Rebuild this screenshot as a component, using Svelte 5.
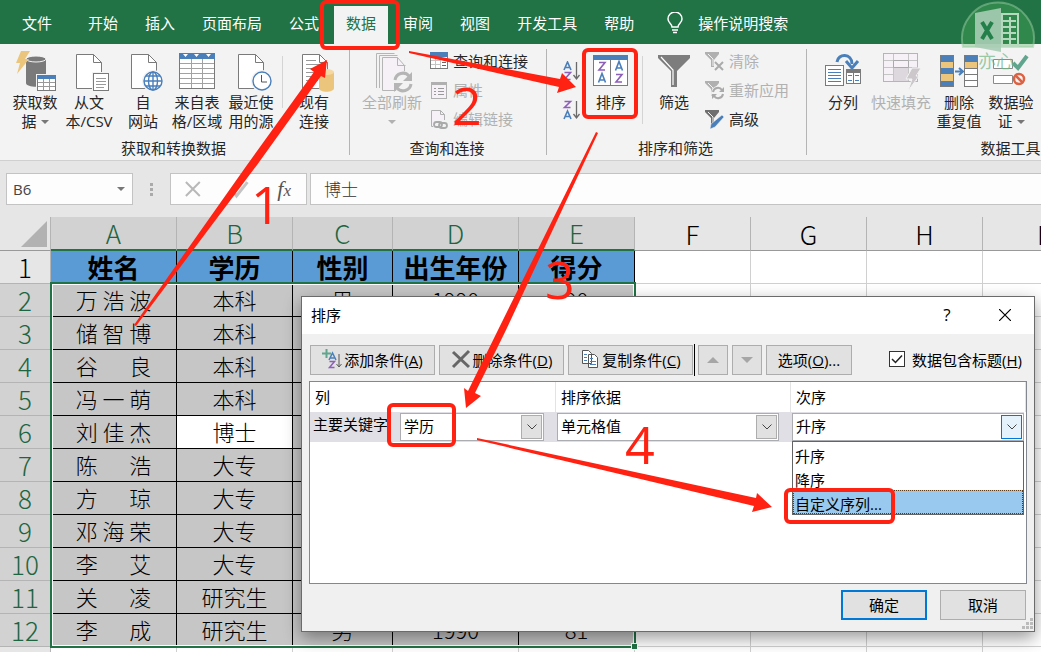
<script lang="ts">
	type Row = { name: string; edu: string; sex: string; year: string; score: string };

	const tabs = ['文件', '开始', '插入', '页面布局', '公式', '数据', '审阅', '视图', '开发工具', '帮助'];
	const activeTab = '数据';

	const sources = [
		{ icon: 'database', lines: ['获取数', '据'], menu: true },
		{ icon: 'text', lines: ['从文', '本/CSV'] },
		{ icon: 'web', lines: ['自', '网站'] },
		{ icon: 'table', lines: ['来自表', '格/区域'] },
		{ icon: 'recent', lines: ['最近使', '用的源'] }
	];

	const tools = [
		{ icon: 'split', lines: ['分列'] },
		{ icon: 'flash', lines: ['快速填充'], disabled: true },
		{ icon: 'dedupe', lines: ['删除', '重复值'] },
		{ icon: 'validate', lines: ['数据验', '证'], menu: true }
	];

	const columns = [
		{ id: 'A', width: 126 },
		{ id: 'B', width: 116 },
		{ id: 'C', width: 100 },
		{ id: 'D', width: 126 },
		{ id: 'E', width: 116 },
		{ id: 'F', width: 116 },
		{ id: 'G', width: 116 },
		{ id: 'H', width: 116 },
		{ id: 'I', width: 116 },
		{ id: 'J', width: 116 },
		{ id: 'K', width: 116 }
	];
	const blank = columns.slice(5);

	const titles = ['姓名', '学历', '性别', '出生年份', '得分'];

	const rows: Row[] = [
		{ name: '万 浩 波', edu: '本科', sex: '男', year: '1990', score: '90' },
		{ name: '储 智 博', edu: '本科', sex: '男', year: '1990', score: '88' },
		{ name: '谷 　 良', edu: '本科', sex: '男', year: '1990', score: '85' },
		{ name: '冯 一 萌', edu: '本科', sex: '女', year: '1990', score: '86' },
		{ name: '刘 佳 杰', edu: '博士', sex: '男', year: '1990', score: '92' },
		{ name: '陈 　 浩', edu: '大专', sex: '男', year: '1990', score: '79' },
		{ name: '方 　 琼', edu: '大专', sex: '女', year: '1990', score: '83' },
		{ name: '邓 海 荣', edu: '大专', sex: '女', year: '1990', score: '80' },
		{ name: '李 　 艾', edu: '大专', sex: '女', year: '1990', score: '84' },
		{ name: '关 　 凌', edu: '研究生', sex: '女', year: '1990', score: '87' },
		{ name: '李 　 成', edu: '研究生', sex: '男', year: '1990', score: '81' }
	];

	const orders = ['升序', '降序', '自定义序列...'];
	let highlighted = $state('自定义序列...');
	let hasTitles = $state(true);
	let cell = $state('B6');
	let formula = $state('博士');
</script>

{#snippet page()}
	<path d="M6.500 4.500h17l8 8v26h-25z" fill="#fff" stroke="#7a7a7a" />
	<path d="M23.500 4.500v8h8" fill="none" stroke="#7a7a7a" />
{/snippet}

{#snippet bigIcon(name: string)}
	<svg class="big-icon" viewBox="0 0 42 42" aria-hidden="true">
		{#if name === 'database'}
			<path d="M12 9v24c0 5 20 5 20 0V9z" fill="#7a7a7a" />
			<ellipse cx="22" cy="9" rx="10" ry="3" fill="#7a7a7a" stroke="#f3f3f3" />
			<path d="M7 1h9l-5 8h4L3 24l3-11H2z" fill="#ecc57c" />
			<rect x="22" y="24" width="20" height="17" fill="#f3f3f3" />
			<rect x="23.500" y="25.500" width="18" height="15" fill="#fff" stroke="#7a7a7a" />
			<path d="M23 25h19v4H23z" fill="#4a7fba" />
			<path d="M24 32.500h17M24 36.500h17M29.500 29v11M35.500 29v11" stroke="#999" />
		{:else if name === 'text'}
			<g transform="translate(2 0)">
				{@render page()}
				<rect x="22" y="22" width="18" height="20" fill="#f3f3f3" />
				<rect x="23.500" y="23.500" width="15" height="17" fill="#fff" stroke="#7a7a7a" />
				<path d="M26 28.500h10M26 31.500h10M26 34.500h10M26 37.500h8" stroke="#999" />
			</g>
		{:else if name === 'web'}
			<g transform="translate(3 0)">
				{@render page()}
				<circle cx="28" cy="31" r="11" fill="#f3f3f3" />
				<g fill="#fff" stroke="#4a7fba" stroke-width="1.400">
					<circle cx="28" cy="31" r="9" />
					<ellipse cx="28" cy="31" rx="4.500" ry="9" />
					<path d="M28 22v18M19 31h18M21 26h14M21 36h14" />
				</g>
			</g>
		{:else if name === 'table'}
			<rect x="3.500" y="3.500" width="35" height="35" fill="#fff" stroke="#7a7a7a" />
			<path d="M3 3h36v6H3z" fill="#4a7fba" />
			<path d="M7 4h5l-2.500 3zM18 4h5l-2.500 3zM30 4h5l-2.500 3z" fill="#fff" />
			<path d="M4 13.500h34M4 18.500h34M4 23.500h34M4 28.500h34M4 33.500h34M15.500 9v29M26.500 9v29" stroke="#a2a2a2" />
		{:else if name === 'recent'}
			<g transform="translate(2 0)">
				{@render page()}
				<circle cx="30" cy="31" r="11" fill="#f3f3f3" />
				<circle cx="30" cy="31" r="9" fill="#fff" stroke="#4a7fba" stroke-width="1.400" />
				<path d="M29.500 25v7H35" fill="none" stroke="#555" />
			</g>
		{:else if name === 'existing'}
			<g transform="translate(3 0)">
				{@render page()}
				<path d="M10 10.500h10M10 14.500h15M10 18.500h17M10 22.500h15M10 26.500h12M10 30.500h12" stroke="#999" />
				<path d="M23 22v16c0 5 15 5 15 0V22z" fill="#ecc57c" />
				<ellipse cx="30.500" cy="22" rx="7.500" ry="3" fill="#f6d9a2" />
			</g>
		{:else if name === 'refresh'}
			<path d="M5.500 38V3.500h18M8.500 38V5.500h18" fill="none" stroke="#b5b5b5" />
			<path d="M11.500 7.500h15l7 8v25h-22z" fill="#f6f1f6" stroke="#b5b5b5" />
			<path d="M26.500 7.500v8h8" fill="none" stroke="#b5b5b5" />
			<circle cx="32" cy="32" r="11" fill="#f3f3f3" />
			<path d="M24 30a8 8 0 0 1 14-4M40 34a8 8 0 0 1-14 4" fill="none" stroke="#b5b5b5" stroke-width="3" />
			<path d="M41 22v9h-9zM23 42v-9h9z" fill="#b5b5b5" />
		{:else if name === 'sort'}
			<rect x="3.500" y="5.500" width="34" height="30" fill="#fff" stroke="#7a7a7a" />
			<path d="M3 5h35v5H3z" fill="#4a7fba" />
			<path d="M20.500 10v25" stroke="#7a7a7a" />
			<g fill="none" stroke-width="1.600">
				<path d="M9 12.500h6l-6 7.500h6M26 24.500h6l-6 7.500h6" stroke="#8c5fb8" />
				<path d="M8.500 32.500l3.500-9 3.500 9M9.500 30h5M25.500 20.500l3.500-9 3.500 9M26.500 18h5" stroke="#4a7fba" />
			</g>
		{:else if name === 'filter'}
			<path d="M5 5h32v3L24 21v16h-6V21L5 8z" fill="#7d7d7d" />
			<path d="M8 7l12 13v15" fill="none" stroke="#fff" stroke-width="1.200" />
		{:else if name === 'split'}
			<path d="M15 12c1-9 15-9 15 2" fill="none" stroke="#4a7fba" stroke-width="3" />
			<path d="M24 11l6 7 6-7" fill="none" stroke="#4a7fba" stroke-width="3" />
			<rect x="3.500" y="15.500" width="18" height="20" fill="#fff" stroke="#7a7a7a" />
			<path d="M6 19.500h13M6 22.500h13M6 25.500h13M6 28.500h13M6 31.500h13" stroke="#4a7fba" />
			<rect x="24.500" y="19.500" width="14" height="14" fill="#fff" stroke="#7a7a7a" />
			<path d="M24 19h15v4H24z" fill="#7a7a7a" />
			<path d="M31.500 23v10" stroke="#7a7a7a" />
			<path d="M26 25.500h4M26 30.500h4M33 25.500h4M33 30.500h4" stroke="#4a7fba" />
		{:else if name === 'flash'}
			<rect x="3.500" y="3.500" width="34" height="28" fill="#f6f1f6" stroke="#b5b5b5" />
			<path d="M4 10.500h33M4 17.500h33M4 24.500h33M13.500 4v27M28.500 4v27" stroke="#c5c5c5" />
			<path d="M13.500 10.500h15v7h-15z" fill="none" stroke="#aaa" />
			<path d="M14 18h14v13H14z" fill="#ddd8dd" />
			<path d="M32 18h9l-5 8h3L28 41l4-12h-6z" fill="#cbc7cb" stroke="#f3f3f3" />
		{:else if name === 'dedupe'}
			<rect x="2.500" y="5.500" width="13" height="31" fill="#4a7fba" stroke="#7a7a7a" />
			<path d="M3 12h12v6H3zM3 24h12v7H3z" fill="#ecc57c" />
			<path d="M17 21.500h7M21 18l4 3.500-4 3.500" fill="none" stroke="#4a7fba" stroke-width="2" />
			<rect x="26.500" y="5.500" width="13" height="31" fill="#fff" stroke="#7a7a7a" />
			<path d="M27 6h12v6H27z" fill="#4a7fba" />
			<path d="M27 12h12v6H27z" fill="#ecc57c" />
			<path d="M27 18.500h12M27 24.500h12M27 30.500h12" stroke="#7a7a7a" />
		{:else if name === 'validate'}
			<path d="M3.500 9.500h19v9h-19zM3.500 25.500h19v8h-19z" fill="#fff" stroke="#8a8a8a" />
			<path d="M23 13l5 5L37 6" fill="none" stroke="#62a58e" stroke-width="4" />
			<circle cx="29" cy="29" r="5" fill="#f3f3f3" stroke="#dd6243" stroke-width="2.500" />
			<path d="M25.500 25.500l7 7" stroke="#dd6243" stroke-width="2.500" />
		{/if}
	</svg>
{/snippet}

{#snippet smallIcon(name: string)}
	<svg class="small-icon" viewBox="0 0 20 20" aria-hidden="true">
		{#if name === 'queries'}
			<rect x="1.500" y="2.500" width="17" height="15" fill="#fff" stroke="#7a7a7a" />
			<path d="M1 1h18v5H1z" fill="#4a7fba" />
			<path d="M11.500 6v11M2 9.500h9M2 13.500h9M6.500 6v11" stroke="#c5c5c5" />
			<path d="M13 8.500h4M13 11.500h4M13 14.500h4" stroke="#666" />
		{:else if name === 'props'}
			<rect x="2.500" y="2.500" width="15" height="16" fill="#f6f1f6" stroke="#b0b0b0" />
			<path d="M2 2h16v3H2z" fill="#b0b0b0" />
			<path d="M5 8.500h2M5 11.500h2M5 14.500h2M9 8.500h6M9 11.500h6M9 14.500h6" stroke="#999" />
		{:else if name === 'links'}
			<path d="M2.500 1.500h9l4 4v12h-13z" fill="#f6f1f6" stroke="#b0b0b0" />
			<path d="M11.500 1.500v4h4" fill="none" stroke="#b0b0b0" />
			<path d="M4 11h15v9H4z" fill="#f3f3f3" />
			<rect x="5" y="13" width="8" height="5" rx="2.500" fill="none" stroke="#aaa" stroke-width="1.800" />
			<rect x="10" y="14" width="8" height="5" rx="2.500" fill="none" stroke="#aaa" stroke-width="1.800" />
		{:else}
			{@const off = name !== 'advanced'}
			<path d="M0 1h14v2L9 9v7H6V9L0 3z" fill={off ? '#b0b0b0' : '#707070'} />
			<path d="M3 3l5 5v7" fill="none" stroke="#f3f3f3" />
			{#if name === 'clear'}
				<path d="M10 11l8 8M18 11l-8 8" stroke="#aaa" stroke-width="2" />
			{:else if name === 'reapply'}
				<circle cx="13" cy="13" r="7" fill="#f3f3f3" />
				<path d="M8 12a5 5 0 0 1 9-2M18 14a5 5 0 0 1-9 2" fill="none" stroke="#aaa" stroke-width="2" />
				<path d="M19 7v5h-5zM7 19v-5h5z" fill="#aaa" />
			{:else}
				<path d="M17 6l2 2-9 10-5 2 1-5z" fill="#4a7fba" stroke="#f3f3f3" stroke-width="0.500" />
			{/if}
		{/if}
	</svg>
{/snippet}

{#snippet azIcon(down: boolean)}
	<svg class="az-icon" viewBox="0 0 20 20" aria-hidden="true">
		<g fill="none" stroke-width="1.600">
			{#if down}
				<path d="M2 9l3.500-8L9 9M3 6.500h5" stroke="#4a7fba" />
				<path d="M2.500 11.500h6l-6 7h6" stroke="#8c5fb8" />
			{:else}
				<path d="M2.500 1.500h6l-6 6h6" stroke="#8c5fb8" />
				<path d="M2 19l3.500-8L9 19M3 16.500h5" stroke="#4a7fba" />
			{/if}
			<path d="M14.500 1v16M11.500 14l3 4 3-4" stroke="#6a6a6a" stroke-width="1.300" />
		</g>
	</svg>
{/snippet}

{#snippet bigButton(icon: string, lines: string[], menu = false, disabled = false)}
	<button class="big" {disabled}>
		{@render bigIcon(icon)}
		{#each lines as line, i}
			<span>{line}{#if menu && i === lines.length - 1}<i class="caret"></i>{/if}</span>
		{/each}
	</button>
{/snippet}

{#snippet chevron()}
	<span class="chevron" aria-hidden="true">
		<svg viewBox="0 0 10 6"><path d="M0.500 0.500L5 5l4.500-4.500" fill="none" stroke="#444" /></svg>
	</span>
{/snippet}

<div class="window">
	<nav class="tabs">
		{#each tabs as tab}
			<button class="tab" class:first={tab === '文件'} class:active={tab === activeTab}>{tab}</button>
		{/each}
		<button class="tab tell">
			<svg viewBox="0 0 16 22" aria-hidden="true">
				<path d="M5 15c0-3-4-4-4-8a7 7 0 0 1 14 0c0 4-4 5-4 8z" fill="none" stroke="#fff" stroke-width="1.500" />
				<path d="M5 18h6M6 20.500h4" stroke="#fff" stroke-width="1.500" />
			</svg>
			操作说明搜索
		</button>
	</nav>

	<div class="ribbon">
		<section class="group get">
			<div class="tools">
				{#each sources as s}
					{@render bigButton(s.icon, s.lines, s.menu)}
				{/each}
				<hr />
				{@render bigButton('existing', ['现有', '连接'])}
			</div>
			<h2>获取和转换数据</h2>
		</section>
		<section class="group query">
			<div class="tools">
				<button class="big wide" disabled>
					{@render bigIcon('refresh')}
					<span>全部刷新</span>
					<span><i class="caret"></i></span>
				</button>
				<div class="stack">
					<button class="small">{@render smallIcon('queries')}查询和连接</button>
					<button class="small" disabled>{@render smallIcon('props')}属性</button>
					<button class="small" disabled>{@render smallIcon('links')}编辑链接</button>
				</div>
			</div>
			<h2>查询和连接</h2>
		</section>
		<section class="group sorting">
			<div class="tools">
				<div class="az">
					<button aria-label="升序">{@render azIcon(true)}</button>
					<button aria-label="降序">{@render azIcon(false)}</button>
				</div>
				{@render bigButton('sort', ['排序'])}
				<hr class="tall" />
				{@render bigButton('filter', ['筛选'])}
				<div class="stack">
					<button class="small" disabled>{@render smallIcon('clear')}清除</button>
					<button class="small" disabled>{@render smallIcon('reapply')}重新应用</button>
					<button class="small">{@render smallIcon('advanced')}高级</button>
				</div>
			</div>
			<h2>排序和筛选</h2>
		</section>
		<section class="group data">
			<div class="tools">
				{#each tools as t}
					{@render bigButton(t.icon, t.lines, t.menu, t.disabled)}
				{/each}
			</div>
			<h2>数据工具</h2>
		</section>
	</div>

	<div class="formula-bar">
		<div class="name-box">
			<input aria-label="名称框" bind:value={cell} />
			<i class="caret"></i>
		</div>
		<span class="dots" aria-hidden="true"></span>
		<div class="fx">
			<svg viewBox="0 0 136 30" aria-hidden="true">
				<path d="M15 8l14 14M29 8L15 22" stroke="#b8b8b8" stroke-width="2" />
				<path d="M62 16l4 6 11-14" fill="none" stroke="#c4c4c4" stroke-width="3" />
			</svg>
			<em>f<small>x</small></em>
		</div>
		<input class="formula" aria-label="编辑栏" bind:value={formula} />
	</div>

	<div class="sheet">
		<table>
			<colgroup>
				<col style="width: 51px" />
				{#each columns as c}
					<col style="width: {c.width}px" />
				{/each}
			</colgroup>
			<thead>
				<tr>
					<th class="corner"><svg viewBox="0 0 26 26" aria-hidden="true"><path d="M26 0v26H0z" fill="#b2b2b2" /></svg></th>
					{#each columns as c, i}
						<th scope="col" class:picked={i < 5}>{c.id}</th>
					{/each}
				</tr>
			</thead>
			<tbody>
				<tr>
					<th scope="row">1</th>
					{#each titles as t}
						<td class="title">{t}</td>
					{/each}
					{#each blank as c (c.id)}<td></td>{/each}
				</tr>
				{#each rows as r, i}
					<tr>
						<th scope="row" class="picked">{i + 2}</th>
						<td class="in">{r.name}</td>
						<td class="in" class:current={i === 4}>{r.edu}</td>
						<td class="in">{r.sex}</td>
						<td class="in">{r.year}</td>
						<td class="in">{r.score}</td>
						{#each blank as c (c.id)}<td></td>{/each}
					</tr>
				{/each}
				<tr>
					<th scope="row"></th>
					{#each columns as c (c.id)}<td></td>{/each}
				</tr>
			</tbody>
		</table>
		<div class="selection"></div>
	</div>

	<div class="dialog" role="dialog" aria-labelledby="sort-title">
		<header>
			<h1 id="sort-title">排序</h1>
			<button aria-label="帮助">?</button>
			<button aria-label="关闭">
				<svg viewBox="0 0 12 12"><path d="M0 0l12 12M12 0L0 12" stroke="#000" stroke-width="1.200" /></svg>
			</button>
		</header>
		<div class="body">
			<div class="bar">
				<button>
					<svg viewBox="0 0 20 20" aria-hidden="true">
						<path d="M4.500 0v9M0 4.500h9" stroke="#62a58e" stroke-width="2" />
						<path d="M7 11l3.500-7 3.500 7M8 9h5" fill="none" stroke="#4a7fba" stroke-width="1.500" />
						<path d="M7.500 12.500h5l-5 6h5" fill="none" stroke="#8c5fb8" stroke-width="1.500" />
						<path d="M17 5v12M14.500 15l2.500 3 2.500-3" fill="none" stroke="#555" />
					</svg>
					<span>添加条件(<u>A</u>)</span>
				</button>
				<button>
					<svg viewBox="0 0 20 20" aria-hidden="true">
						<path d="M2 3l16 15M18 2L2 18" stroke="#666" stroke-width="3" />
					</svg>
					<span>删除条件(<u>D</u>)</span>
				</button>
				<button>
					<svg viewBox="0 0 20 20" aria-hidden="true">
						<path d="M2.500 1.500h6l3 3v10h-9zM8.500 5.500h6l3 3v10h-9z" fill="#fff" stroke="#555" />
						<path d="M4 5.500h3M4 8.500h3M4 11.500h3M10 9.500h3M10 12.500h6M10 15.500h6" stroke="#4a7fba" />
					</svg>
					<span>复制条件(<u>C</u>)</span>
				</button>
				<span class="divider"></span>
				<button class="move" aria-label="上移" disabled><i class="up"></i></button>
				<button class="move" aria-label="下移" disabled><i class="down"></i></button>
				<button class="options"><span>选项(<u>O</u>)...</span></button>
				<label class="check">
					<input type="checkbox" bind:checked={hasTitles} />
					<span>数据包含标题(<u>H</u>)</span>
				</label>
			</div>

			<div class="levels">
				<div class="line heads">
					<span>列</span>
					<span>排序依据</span>
					<span>次序</span>
				</div>
				<div class="line fields">
					<div class="field">
						<label for="key">主要关键字</label>
						<div class="combo">
							<select id="key"><option>学历</option></select>
							{@render chevron()}
						</div>
					</div>
					<div class="field">
						<div class="combo">
							<select aria-label="排序依据"><option>单元格值</option></select>
							{@render chevron()}
						</div>
					</div>
					<div class="field">
						<div class="combo open">
							<select aria-label="次序"><option>升序</option></select>
							{@render chevron()}
							<ul role="listbox" aria-label="次序">
								{#each orders as o}
									<!-- svelte-ignore a11y_click_events_have_key_events -->
									<li role="option" tabindex="-1" aria-selected={o === highlighted} onclick={() => (highlighted = o)}>{o}</li>
								{/each}
							</ul>
						</div>
					</div>
				</div>
			</div>

			<footer>
				<button class="ok">确定</button>
				<button>取消</button>
			</footer>
		</div>
		<svg class="grip" viewBox="0 0 12 12" aria-hidden="true">
			<path d="M9 0h3v3H9zM5 4h3v3H5zM9 4h3v3H9zM1 8h3v3H1zM5 8h3v3H5zM9 8h3v3H9z" fill="#bbb" />
		</svg>
	</div>

	<!-- logo stamp in the corner -->
	<svg class="stamp" viewBox="0 0 80 80">
		<path d="M3 47a36 36 0 1 1 70 0z" fill="#4fae5b" fill-opacity="0.35" stroke="#9ccfa4" stroke-opacity="0.5" stroke-width="2" />
		<path d="M42 14h16v32H42z" fill="none" stroke="#b5d9bd" stroke-width="2" />
		<path d="M43 21h13M43 27h13M43 33h13M43 39h13M50 17v28" stroke="#b5d9bd" stroke-width="2" />
		<path d="M15 13l26-5v44l-26-5z" fill="#a8cdb5" fill-opacity="0.9" />
		<path d="M22 22l10 17M32 22L22 39" stroke="#23804a" stroke-width="4" />
		<text x="18" y="68">亦心</text>
	</svg>

	<!-- numbered steps drawn over everything -->
	<svg class="steps" width="1041" height="652" viewBox="0 0 1041 652">
		<g fill="none" stroke="#ff2212" stroke-width="4">
			<rect x="322" y="2" width="76" height="46" rx="4" />
			<rect x="584" y="50" width="52" height="67" rx="4" />
			<rect x="389" y="405" width="65" height="40" rx="4" />
			<rect x="786" y="490" width="107" height="32" rx="4" />
		</g>
		<g fill="#ff2212">
			<polygon points="134,325 247,165 314,72 310,69 327,60 325,78 321,76 257,165 136,326" />
			<polygon points="409,51 560,79 562,73 576,87 557,93 559,87 409,53" />
			<polygon points="596,132 598,133 506,330 475,393 481,396 466,408 464,388 468,391 498,330" />
			<polygon points="477,438 756,498 757,493 772,507 752,512 754,506 477,440" />
			<text x="251" y="224">1</text>
			<text x="452" y="125">2</text>
			<text x="545" y="299">3</text>
			<text x="625" y="464">4</text>
		</g>
	</svg>
</div>

<style>
	:global(body) {
		margin: 0;
	}
	.window {
		position: relative;
		display: flex;
		flex-direction: column;
		height: 100vh;
		overflow: hidden;
		background: #e6e6e6;
		color: #262626;
		font-family: "Open Sans", "Noto Sans CJK SC", sans-serif;
		font-size: 15px;
	}
	button,
	input,
	select {
		font: inherit;
		color: inherit;
		box-sizing: border-box;
	}
	button {
		padding: 0;
		border: 0;
		background: none;
		white-space: nowrap;
	}
	h1,
	h2 {
		margin: 0;
		font-size: 15px;
		font-weight: 400;
	}

	/* tabs */
	.tabs {
		display: flex;
		align-items: flex-end;
		gap: 3px;
		height: 44px;
		padding-left: 10px;
		background: #217346;
		flex: none;
	}
	.tab {
		height: 38px;
		padding: 0 12px 5px;
		color: #fff;
	}
	.tab.first {
		margin-right: 9px;
	}
	.tab.active {
		background: #f3f3f3;
		color: #217346;
	}
	.tell {
		display: flex;
		align-items: center;
		gap: 15px;
		margin-left: 6px;
	}
	.tell svg {
		width: 16px;
		height: 22px;
	}

	/* ribbon */
	.ribbon {
		display: flex;
		height: 116px;
		flex: none;
		overflow: hidden;
		background: #f3f3f3;
		border-bottom: 1px solid #d0d0d0;
		line-height: 19px;
	}
	.group {
		display: flex;
		flex-direction: column;
		justify-content: space-between;
		flex: none;
		box-sizing: border-box;
		margin: 5px 0;
		border-right: 1px solid #b4b4b4;
	}
	.group h2 {
		line-height: 14px;
		text-align: center;
	}
	.get {
		width: 350px;
		padding-left: 8px;
	}
	.query {
		width: 197px;
		padding-left: 12px;
	}
	.query h2 {
		margin-left: -14px;
	}
	.get h2 {
		margin-left: -10px;
	}
	.sorting {
		width: 260px;
		padding-left: 15px;
	}
	.sorting h2 {
		margin-left: -17px;
	}
	.data {
		width: 408px;
	}
	.data .tools {
		gap: 4px;
		padding-left: 9px;
	}
	.tools {
		display: flex;
		align-items: flex-start;
	}
	.big {
		display: flex;
		flex-direction: column;
		align-items: center;
		width: 54px;
		line-height: 19px;
	}
	.big.wide {
		width: 60px;
	}
	.data .big:last-child {
		margin-left: -6px;
	}
	.big-icon {
		width: 42px;
		height: 42px;
		margin: 1px 0;
		overflow: visible;
	}
	.big:disabled,
	.small:disabled {
		color: #b1b1b1;
	}
	.caret {
		display: inline-block;
		margin-left: 4px;
		border: 4px solid transparent;
		border-top-color: #777;
		border-bottom: 0;
		vertical-align: 3px;
	}
	.big:disabled .caret {
		margin: 0;
		border-top-color: #b1b1b1;
	}
	hr {
		width: 1px;
		height: 52px;
		margin: 7px 4px 0;
		border: 0;
		background: #d4d4d4;
	}
	hr.tall {
		height: 68px;
	}
	.stack {
		display: flex;
		flex-direction: column;
		gap: 10px;
		padding: 3px 0 0 7px;
	}
	.small {
		display: flex;
		align-items: center;
		gap: 4px;
		line-height: 19px;
	}
	.sorting .stack {
		padding-left: 4px;
	}
	.small-icon {
		width: 20px;
		height: 20px;
		margin: -1px 0 0;
	}
	.az {
		display: flex;
		flex-direction: column;
		gap: 19px;
		padding: 12px 2px 0 0;
	}
	.az button {
		display: flex;
	}
	.az-icon {
		width: 20px;
		height: 20px;
	}

	/* formula bar */
	.formula-bar {
		display: flex;
		align-items: center;
		height: 56px;
		padding-left: 6px;
		flex: none;
	}
	.name-box,
	.fx,
	.formula {
		box-sizing: border-box;
		height: 32px;
		border: 1px solid #c3c3c3;
		background: #fdfdfd;
	}
	.name-box {
		display: flex;
		align-items: center;
		width: 127px;
		padding: 0 7px 0 6px;
		font-size: 15px;
	}
	.name-box input {
		flex: 1;
		min-width: 0;
		padding: 0;
		border: 0;
		background: none;
		color: #444;
	}
	.dots {
		width: 3px;
		height: 13px;
		margin: 0 17px;
		background: repeating-linear-gradient(#aaa 0 3px, transparent 3px 5px);
	}
	.fx {
		position: relative;
		display: flex;
		align-items: center;
		justify-content: flex-end;
		width: 137px;
		padding-right: 15px;
	}
	.fx svg {
		position: absolute;
		left: 0;
		top: 0;
		width: 135px;
		height: 30px;
	}
	.fx em {
		font: italic 22px "Liberation Serif", serif;
		color: #555;
	}
	.fx small {
		font-size: 17px;
	}
	.formula {
		flex: 1;
		min-width: 0;
		margin-left: 3px;
		padding: 0 13px 2px;
		border-right: 0;
		color: #333;
		font-size: 17px;
		font-weight: 300;
	}

	/* grid */
	.sheet {
		position: relative;
		flex: 1;
		overflow: hidden;
		background: #fff;
	}
	table {
		table-layout: fixed;
		width: 0;
		border-collapse: separate;
		border-spacing: 0;
		font-family: "Noto Sans CJK SC", sans-serif;
	}
	th,
	td {
		box-sizing: border-box;
		height: 33px;
		padding: 0;
		border-right: 1px solid #d0d0d0;
		border-bottom: 1px solid #d0d0d0;
		text-align: center;
		white-space: pre;
		font-size: 22px;
		font-weight: 300;
		line-height: 32px;
		color: #000;
	}
	th {
		font-size: 26px;
		background: #e6e6e6;
		border-color: #b4b4b4;
	}
	thead th {
		height: 34px;
		border-bottom-color: #999;
	}
	th.picked {
		background: #d2d2d2;
		color: #1d6540;
	}
	thead th.picked {
		border-bottom: 2px solid #217346;
	}
	.corner svg {
		display: block;
		width: 26px;
		height: 26px;
		margin: 0 3px 0 auto;
	}
	td.title {
		background: #5b9bd5;
		border-color: #000;
		font-size: 26px;
		font-weight: 700;
	}
	td.in {
		padding-bottom: 2px;
		background: #c6c6c6;
		border-color: #000;
		line-height: 30px;
	}
	td.in.current {
		background: #fff;
	}
	.selection {
		position: absolute;
		left: 50px;
		top: 65px;
		box-sizing: border-box;
		width: 586px;
		height: 366px;
		border: 2px solid #217346;
		box-shadow: inset 0 0 0 1px #fff;
	}
	.selection::after {
		content: "";
		position: absolute;
		right: -4px;
		bottom: -4px;
		width: 5px;
		height: 5px;
		border: 1px solid #fff;
		background: #217346;
	}

	/* sort dialog */
	.dialog {
		position: absolute;
		left: 301px;
		top: 296px;
		box-sizing: border-box;
		width: 734px;
		border: 1px solid #6b6b6b;
		background: #f0f0f0;
		box-shadow: 0 6px 16px rgba(0, 0, 0, 0.4);
		color: #000;
	}
	.dialog header {
		display: flex;
		align-items: center;
		height: 37px;
		padding-left: 9px;
		background: #fff;
	}
	.dialog header h1 {
		flex: 1;
		padding-bottom: 2px;
	}
	.dialog header button {
		display: flex;
		align-items: center;
		justify-content: center;
		width: 58px;
		height: 37px;
		padding-bottom: 2px;
		font-size: 17px;
	}
	.dialog header svg {
		width: 12px;
		height: 12px;
	}
	.body {
		padding: 11px 7px;
	}
	.bar {
		display: flex;
		align-items: center;
		gap: 4px;
		padding-left: 1px;
	}
	.bar button,
	footer button {
		display: flex;
		align-items: center;
		justify-content: center;
		box-sizing: border-box;
		height: 30px;
		padding-bottom: 2px;
		border: 1px solid #adadad;
		background: #e1e1e1;
	}
	.bar button {
		gap: 2px;
		width: 125px;
	}
	.bar button svg {
		width: 20px;
		height: 20px;
	}
	.bar .move {
		width: 30px;
		padding: 0;
	}
	.bar .options {
		width: 86px;
	}
	.divider {
		width: 1px;
		height: 32px;
		margin: -1px -1px -1px -3px;
		background: #000;
	}
	.up,
	.down {
		border: 6px solid transparent;
		border-top: 0;
		border-bottom-color: #a6a6a6;
	}
	.down {
		border-top: 6px solid #a6a6a6;
		border-bottom: 0;
	}
	.check {
		display: flex;
		align-items: center;
		gap: 7px;
		margin-left: auto;
		padding: 0 5px 2px 0;
		white-space: nowrap;
	}
	.check input {
		appearance: none;
		width: 16px;
		height: 16px;
		margin: 0;
		border: 1px solid #333;
		background: #fff;
	}
	.check input:checked {
		background: #fff url("data:image/svg+xml,%3Csvg xmlns='http://www.w3.org/2000/svg' viewBox='0 0 14 14'%3E%3Cpath d='M2 7l3.500 3.500L12 3.500' fill='none' stroke='%23222' stroke-width='1.500'/%3E%3C/svg%3E");
	}
	.levels {
		box-sizing: border-box;
		height: 203px;
		margin: 6px 0;
		border: 1px solid #828790;
		background: #fff;
	}
	.line {
		display: grid;
		grid-template-columns: 246px 235px 1fr;
	}
	.heads {
		height: 30px;
	}
	.heads span {
		padding-left: 5px;
		border-right: 1px solid #e3e3e3;
		line-height: 30px;
	}
	.fields {
		height: 30px;
		margin-right: 2px;
		background: #e0dfe6;
	}
	.field {
		display: flex;
		padding: 1px 0 1px 1px;
	}
	.field label {
		width: 87px;
		padding-left: 2px;
		line-height: 22px;
		white-space: nowrap;
	}
	.combo {
		position: relative;
		flex: 1;
		margin-right: 12px;
		border: 1px solid #abadb3;
		background: #fff;
	}
	.combo.open {
		margin-right: 0;
	}
	.combo select {
		display: block;
		width: 100%;
		height: 26px;
		padding: 0 3px 2px;
		border: 0;
		appearance: none;
		background: none;
	}
	.chevron {
		position: absolute;
		right: 1px;
		top: 1px;
		bottom: 1px;
		display: flex;
		align-items: center;
		justify-content: center;
		width: 19px;
		border: 1px solid #adadad;
		background: #e1e1e1;
		pointer-events: none;
	}
	.chevron svg {
		width: 10px;
		height: 6px;
	}
	.open .chevron {
		border-color: #0078d7;
		background: #e5f1fb;
	}
	.combo ul {
		position: absolute;
		left: -1px;
		right: -1px;
		top: 27px;
		margin: 0;
		padding: 0;
		border: 1px solid #646464;
		background: #fff;
		list-style: none;
	}
	.combo li {
		box-sizing: border-box;
		height: 24px;
		padding-left: 1px;
		border: 1px solid transparent;
		line-height: 26px;
	}
	.combo li[aria-selected="true"] {
		border: 1px dotted #5a3a1a;
		background: #99c9ef;
	}
	footer {
		display: flex;
		justify-content: flex-end;
		gap: 13px;
		padding-right: 1px;
	}
	footer button {
		width: 86px;
	}
	footer .ok {
		border: 2px solid #0078d7;
	}
	.grip {
		position: absolute;
		right: 1px;
		bottom: 1px;
		width: 12px;
		height: 12px;
	}

	/* overlays */
	.stamp {
		position: absolute;
		top: 0;
		right: 1px;
		width: 80px;
		height: 80px;
		pointer-events: none;
	}
	.stamp text {
		font-size: 18px;
		fill: #6fb583;
		fill-opacity: 0.7;
	}
	.steps {
		position: absolute;
		left: 0;
		top: 0;
		pointer-events: none;
	}
	.steps text {
		font-size: 52px;
	}
</style>
